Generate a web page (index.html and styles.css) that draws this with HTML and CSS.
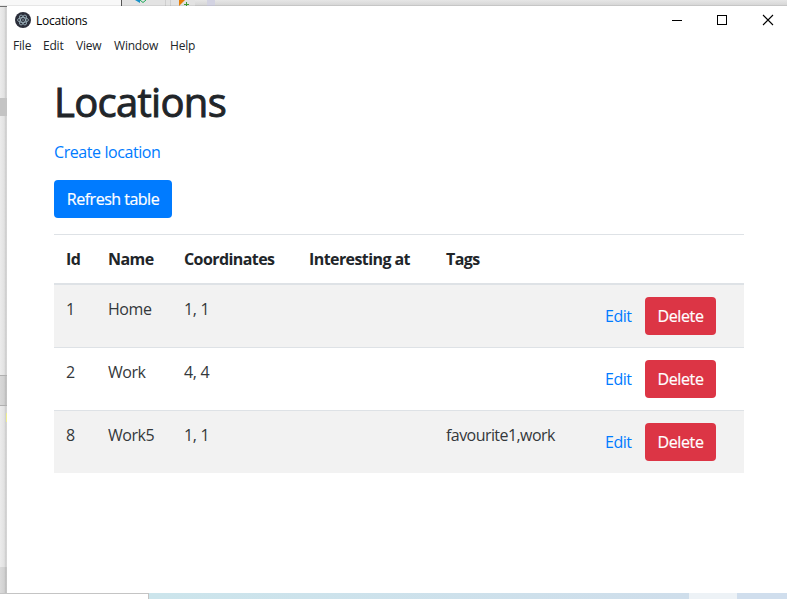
FILE: index.html
```html
<!DOCTYPE html>
<html lang="en">
<head>
<meta charset="utf-8">
<title>Locations</title>
<link rel="stylesheet" href="styles.css">
</head>
<body>
<div class="desktop">
  <div class="back-top">
    <svg width="787" height="6" viewBox="0 0 787 6">
      <rect width="121" height="6" fill="#f8f8f8"/>
      <rect x="121" width="1" height="6" fill="#555"/>
      <rect x="122" width="49" height="6" fill="#e3e3e3"/>
      <rect x="165" width="1" height="6" fill="#cfcfcf"/>
      <rect x="170" width="1" height="6" fill="#cfcfcf"/>
      <rect x="171" width="24" height="6" fill="#e2e2e2"/>
      <path d="M135 0h5v3z" fill="#1691c9"/>
      <path d="M140 0l3 2.500l3-2.500" fill="none" stroke="#18a957"/>
      <path d="M179 0h6l-6 6z" fill="#e87d05"/>
      <path d="M184 4.500h5M186.500 2v4" stroke="#3f9b2f"/>
      <rect x="207" width="8" height="6" fill="#d3d3e2"/>
      <rect y="5" width="787" height="1" fill="#000" opacity=".07"/>
    </svg>
  </div>
  <div class="back-left">
    <i class="s1"></i><i class="s2"></i><i class="s3"></i><i class="s4"></i><i class="s5"></i><i class="s6"></i><i class="s7"></i><i class="s8"></i>
  </div>
  <main class="window">
    <header class="titlebar">
      <svg class="logo" width="16" height="16" viewBox="0 0 16 16">
        <circle cx="8" cy="8" r="8" fill="#2b2e3a"/>
        <g fill="none" stroke="#b4cdd6" stroke-width=".8" opacity=".9">
          <ellipse cx="8" cy="8" rx="5.500" ry="2.400" transform="rotate(0 8 8)"/>
          <ellipse cx="8" cy="8" rx="5.500" ry="2.400" transform="rotate(60 8 8)"/>
          <ellipse cx="8" cy="8" rx="5.500" ry="2.400" transform="rotate(120 8 8)"/>
        </g>
        <circle cx="8" cy="8" r=".7" fill="#b4cdd6"/>
      </svg>
      <span class="caption">Locations</span>
      <svg class="controls" width="104" height="12" viewBox="0 0 104 12" fill="none" stroke="#000">
        <path d="M1 6.500h10"/>
        <rect x="46.500" y="1.500" width="9" height="9"/>
        <path d="M92 1l10 10M102 1l-10 10" stroke-width="1.100"/>
      </svg>
    </header>
    <nav class="menu"><span>File</span><span>Edit</span><span>View</span><span>Window</span><span>Help</span></nav>
    <section class="page">
      <h1>Locations</h1>
      <p><a class="create">Create location</a></p>
      <button class="btn primary">Refresh table</button>
      <table>
        <colgroup><col class="c1"><col class="c2"><col class="c3"><col class="c4"><col class="c5"><col class="c6"></colgroup>
        <thead><tr><th>Id</th><th>Name</th><th>Coordinates</th><th>Interesting at</th><th>Tags</th><th></th></tr></thead>
        <tbody>
          <tr><td>1</td><td>Home</td><td class="coords">1, 1</td><td></td><td></td><td><div class="actions"><a>Edit</a><button class="btn danger">Delete</button></div></td></tr>
          <tr><td>2</td><td>Work</td><td class="coords">4, 4</td><td></td><td></td><td><div class="actions"><a>Edit</a><button class="btn danger">Delete</button></div></td></tr>
          <tr><td>8</td><td>Work5</td><td class="coords">1, 1</td><td></td><td class="tags">favourite1,work</td><td><div class="actions"><a>Edit</a><button class="btn danger">Delete</button></div></td></tr>
        </tbody>
      </table>
    </section>
  </main>
  <footer class="back-bottom"><i class="b1"></i><i class="b2"></i><i class="b3"></i><i class="b4"></i></footer>
</div>
</body>
</html>
```
FILE: styles.css
```css
* { box-sizing: border-box; }
body { margin: 0; overflow: hidden; background: #fff; color: #212529; font: 16px/24px "Open Sans", "Noto Sans", sans-serif; }
.desktop { width: 787px; height: 599px; display: grid; grid-template: 6px 587px 6px / 7px 780px; }
.back-top { grid-column: 1 / 3; background: linear-gradient(#e6e6e6, #d4d4d4); }
.back-top svg { display: block; }
.back-left { display: flex; flex-direction: column; background: linear-gradient(90deg, #ececec, #e2e2e2 60%, #cacaca 85%, #dedede); }
.back-left i { flex: none; }
.s1 { height: 92px; border-top: 1px solid #707070; }
.s2 { height: 18px; background: #c4c4c4; }
.s3 { height: 259px; }
.s4 { height: 31px; background: rgba(0, 0, 0, .08); border-top: 1px solid #b0b0b0; border-bottom: 1px solid #b0b0b0; }
.s5 { height: 7px; }
.s6 { height: 9px; width: 1px; margin-left: 6px; background: #eeee90; }
.s7 { height: 145px; }
.s8 { height: 26px; background: rgba(0, 0, 0, .07); }
.window { background: #fff; }
.titlebar { height: 28px; display: flex; align-items: center; padding: 0 12px 0 8px; }
.caption { margin-left: 5px; padding-top: 2px; color: #000; font-size: 12px; letter-spacing: -.25px; }
.controls { margin-left: auto; }
.menu { height: 24px; display: grid; grid-template-columns: 30px 33px 38px 56px 40px; padding-left: 6px; font-size: 12px; letter-spacing: -.2px; }
.page { width: 690px; margin-left: 47px; padding-top: 20px; }
h1 { margin: 0 0 14px; font-size: 40px; line-height: 48px; font-weight: 500; letter-spacing: -.7px; -webkit-text-stroke: .9px #212529; }
p { margin: 0 0 16px; }
a { color: #007bff; }
.create { letter-spacing: -.42px; }
.btn { display: block; height: 38px; padding: 0; border: 0; border-radius: 4px; color: #fff; font: inherit; letter-spacing: -.38px; }
.primary { width: 118px; margin-bottom: 16px; background: #007bff; letter-spacing: -.5px; -webkit-text-stroke: .2px #fff; }
.danger { width: 71px; background: #dc3545; -webkit-text-stroke: .2px #fff; }
table { width: 690px; table-layout: fixed; border-spacing: 0; }
.c1 { width: 42px; }
.c2 { width: 76px; }
.c3 { width: 125px; }
.c4 { width: 137px; }
.c5 { width: 159px; }
.c6 { width: 151px; }
th, td { padding: 12px; text-align: left; vertical-align: top; white-space: nowrap; border-top: 1px solid #dee2e6; }
th { height: 51px; border-bottom: 2px solid #dee2e6; font-weight: 700; letter-spacing: -.58px; }
td { color: #34383b; letter-spacing: -.45px; }
.coords { letter-spacing: -.3px; }
.tags { letter-spacing: -.56px; }
tbody tr:first-child td { border-top: 0; }
tbody tr:nth-child(odd) { background: #f2f2f2; }
.actions { display: flex; align-items: center; justify-content: space-between; width: 111px; }
.back-bottom { grid-column: 1 / 3; display: grid; grid-template-columns: 149px 540px 48px 50px; }
.b1 { border-top: 1px solid #c4c4c4; border-right: 1px solid #c4c4c4; }
.b2 { background: linear-gradient(90deg, #cce5ec, #cfdeeb); }
.b3 { background: #edf2f6; }
.b4 { background: #d0deed; }
```
